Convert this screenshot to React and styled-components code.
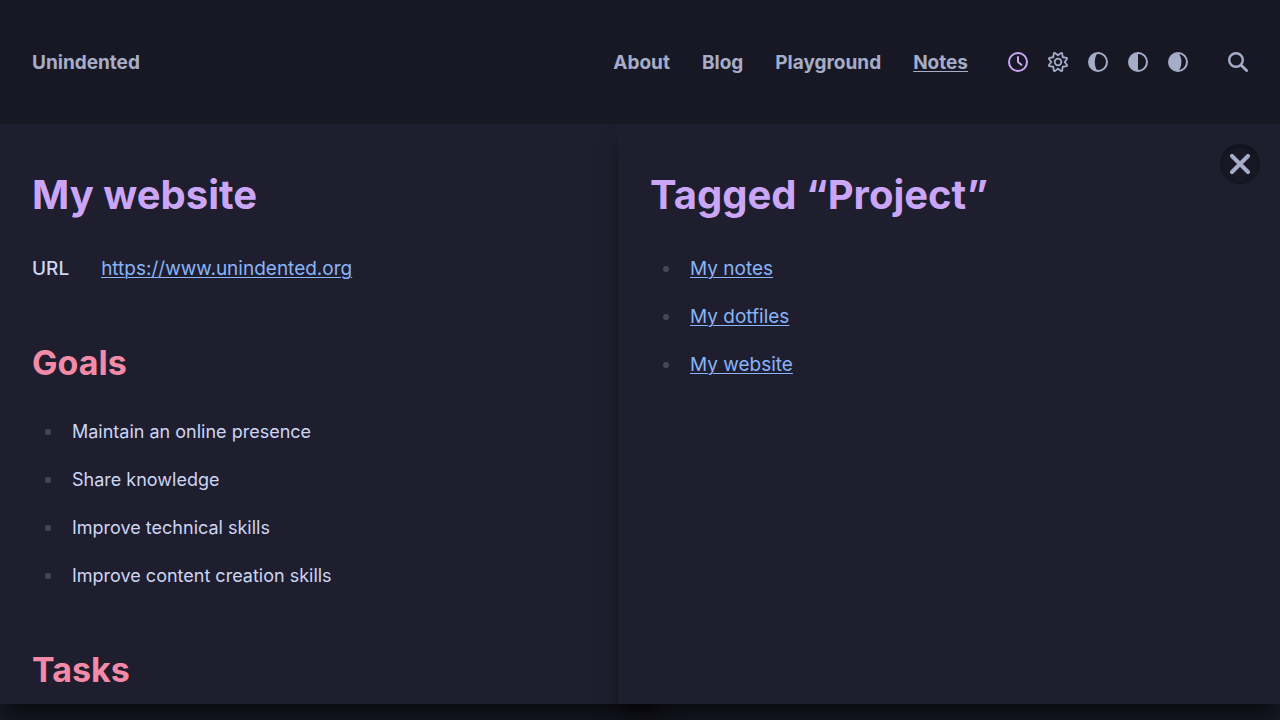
import React from "react";
import styled, { createGlobalStyle } from "styled-components";

const GlobalStyle = createGlobalStyle`
  *, *::before, *::after { box-sizing: border-box; }
  body {
    margin: 0;
    background: #181825;
    color: #cdd6f4;
    font-family: Inter, "Liberation Sans", sans-serif;
    font-size: 19px;
    line-height: 28px;
  }
`;

const Page = styled.div`
  display: flex;
  flex-direction: column;
  height: 100vh;
  overflow: hidden;
`;

const Header = styled.header`
  display: flex;
  align-items: center;
  justify-content: space-between;
  padding: 48px 32px;
  color: #a6adc8;
`;

const Bar = styled.nav`
  display: flex;
  align-items: center;
  gap: 32px;
`;

const NavLink = styled.a`
  padding-top: 2px;
  color: inherit;
  font-weight: 700;
  line-height: 26px;
  text-decoration: ${(p) => (p.$active ? "underline" : "none")};
  text-decoration-thickness: 1px;
  text-underline-offset: 2px;
`;

const Tools = styled.div`
  display: flex;
  align-items: center;
  margin: 0 -10px 0 -2px;
`;

const IconButton = styled.button`
  display: grid;
  place-items: center;
  width: 40px;
  height: 28px;
  padding: 0;
  border: 0;
  background: none;
  color: ${(p) => (p.$active ? "#cba6f7" : "#a6adc8")};
  cursor: pointer;
`;

const SearchButton = styled(IconButton)`
  margin-left: 20px;
`;

const Panels = styled.main`
  display: flex;
  flex: 1;
  min-height: 0;
  padding-bottom: 16px;
`;

const Panel = styled.section`
  position: relative;
  flex: 1 1 0;
  min-width: 0;
  padding: 43px 32px 0;
  background: #1e1e2e;
  box-shadow: 0 16px 20px -4px rgb(0 0 0 / 55%);
  clip-path: inset(0 -32px -32px -32px);

  & + & {
    margin-left: -44px;
  }
`;

const PanelBody = styled.div`
  height: 100%;
  overflow: hidden;
`;

const Title = styled.h1`
  margin: 0 0 32px;
  color: #cba6f7;
  font-size: 40px;
  font-weight: 700;
  line-height: 56px;
`;

const Subtitle = styled.h2`
  margin: 56px 0 31px;
  color: #f38ba8;
  font-size: 34px;
  font-weight: 700;
  line-height: 48px;
`;

const Properties = styled.dl`
  display: flex;
  gap: 32px;
  margin: 0;
`;

const Term = styled.dt`
  font-weight: 500;
`;

const Value = styled.dd`
  margin: 0;
`;

const Link = styled.a`
  color: #89b4fa;
  font-size: 19px;
  text-decoration: underline;
  text-decoration-thickness: 1px;
  text-underline-offset: 2px;
`;

const List = styled.ul`
  display: grid;
  gap: 20px;
  margin: 0;
  padding: 0;
  font-size: 18px;
  list-style: none;
`;

const Item = styled.li`
  display: flex;
  align-items: center;
  gap: 21px;
  padding-left: 13px;

  &::before {
    content: "";
    width: 6px;
    height: 6px;
    border-radius: 50%;
    background: #45475a;
  }
`;

const CloseButton = styled.button`
  position: absolute;
  top: 20px;
  right: 20px;
  display: grid;
  place-items: center;
  width: 40px;
  height: 40px;
  padding: 0;
  border: 0;
  border-radius: 50%;
  background: #181825;
  box-shadow: inset 0 2px 4px rgb(0 0 0 / 30%);
  color: #a6adc8;
  cursor: pointer;
`;

const Svg = ({ children }) => (
  <svg width="20" height="20" viewBox="0 0 20 20" fill="none" stroke="currentColor" strokeWidth="2" aria-hidden="true">
    {children}
  </svg>
);

const Phase = ({ shade }) => (
  <Svg>
    <circle cx="10" cy="10" r="9" />
    <path d={shade} fill="currentColor" stroke="none" />
  </Svg>
);

const gear = Array.from({ length: 24 }, (_, i) => {
  const radius = [9.7, 9.7, 6.7][i % 3];
  const tooth = Math.floor(i / 3) * 45 - 67.5;
  const angle = ((tooth + [-3, 3, 22.5][i % 3]) * Math.PI) / 180;
  return `${(10 + radius * Math.cos(angle)).toFixed(2)},${(10 + radius * Math.sin(angle)).toFixed(2)}`;
}).join(" ");

const themes = [
  {
    label: "Automatic theme",
    icon: (
      <Svg>
        <circle cx="10" cy="10" r="9" />
        <path d="M10 5v5l3.4 2.8" strokeLinecap="round" strokeLinejoin="round" />
      </Svg>
    ),
  },
  {
    label: "Light theme",
    icon: (
      <Svg>
        <polygon points={gear} strokeWidth="1.8" strokeLinejoin="round" />
        <circle cx="10" cy="10" r="3.3" strokeWidth="1.8" />
      </Svg>
    ),
  },
  { label: "Dim theme", icon: <Phase shade="M10 1a9 9 0 0 0 0 18C5.8 16 5.8 4 10 1Z" /> },
  { label: "Dark theme", icon: <Phase shade="M10 1a9 9 0 0 0 0 18Z" /> },
  { label: "Darkest theme", icon: <Phase shade="M10 1a9 9 0 0 0 0 18C14.5 16 14.5 4 10 1Z" /> },
];

const goals = [
  "Maintain an online presence",
  "Share knowledge",
  "Improve technical skills",
  "Improve content creation skills",
];

export default function App() {
  return (
    <Page>
      <GlobalStyle />
      <Header>
        <NavLink href="#home">Unindented</NavLink>
        <Bar>
          <NavLink href="#about">About</NavLink>
          <NavLink href="#blog">Blog</NavLink>
          <NavLink href="#playground">Playground</NavLink>
          <NavLink href="#notes" $active aria-current="page">Notes</NavLink>
          <Tools>
            {themes.map((t, i) => (
              <IconButton key={t.label} type="button" aria-label={t.label} $active={i === 0}>
                {t.icon}
              </IconButton>
            ))}
            <SearchButton type="button" aria-label="Search">
              <Svg>
                <circle cx="8" cy="8" r="6.8" strokeWidth="2.4" />
                <path d="m13.2 13.2 5.4 5.4" strokeWidth="2.8" strokeLinecap="round" />
              </Svg>
            </SearchButton>
          </Tools>
        </Bar>
      </Header>
      <Panels>
        <Panel>
          <PanelBody>
            <Title>My website</Title>
            <Properties>
              <Term>URL</Term>
              <Value>
                <Link href="#website">https://www.unindented.org</Link>
              </Value>
            </Properties>
            <Subtitle>Goals</Subtitle>
            <List>
              {goals.map((goal) => (
                <Item key={goal}>{goal}</Item>
              ))}
            </List>
            <Subtitle>Tasks</Subtitle>
          </PanelBody>
        </Panel>
        <Panel>
          <CloseButton type="button" aria-label="Close">
            <Svg>
              <path d="m2 2 16 16M18 2 2 18" strokeWidth="4" strokeLinecap="round" />
            </Svg>
          </CloseButton>
          <PanelBody>
            <Title>Tagged “Project”</Title>
            <List>
              {["My notes", "My dotfiles", "My website"].map((note) => (
                <Item key={note}>
                  <Link href="#note">{note}</Link>
                </Item>
              ))}
            </List>
          </PanelBody>
        </Panel>
      </Panels>
    </Page>
  );
}
